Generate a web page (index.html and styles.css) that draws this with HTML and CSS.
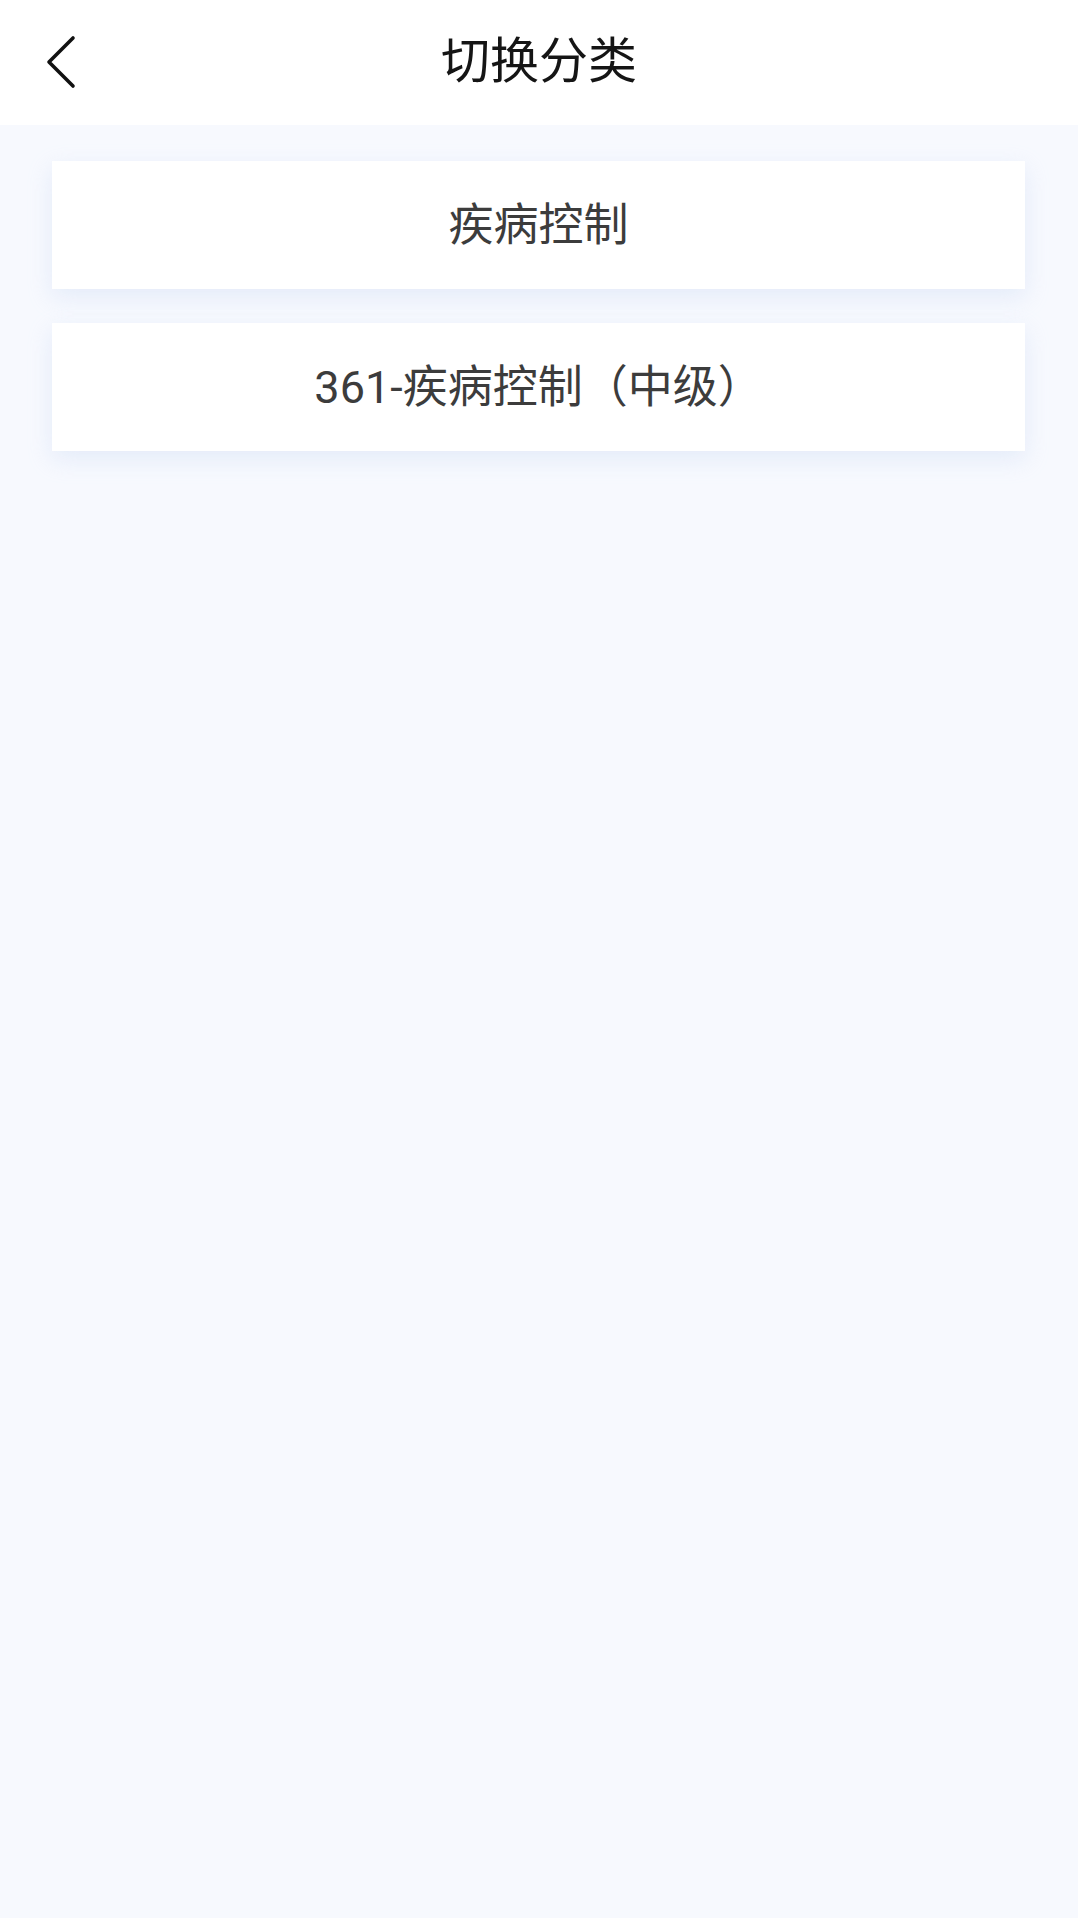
FILE: index.html
```html
<!DOCTYPE html>
<html lang="zh-CN">
<head>
<meta charset="utf-8">
<title>切换分类</title>
<link rel="stylesheet" href="styles.css">
</head>
<body>
<div class="page">
  <header class="topbar">
    <button class="back" aria-label="返回">
      <svg width="40" height="60" viewBox="0 0 40 60">
        <path d="M29 4 L5 28 L29 52" fill="none" stroke="#111" stroke-width="3.6" stroke-linecap="round" stroke-linejoin="round"/>
      </svg>
    </button>
    <h1 class="title">切换分类</h1>
  </header>
  <main class="list">
    <div class="card">疾病控制</div>
    <div class="card">361-疾病控制（中级）</div>
  </main>
</div>
</body>
</html>
```
FILE: styles.css
```css
html, body {
  margin: 0;
  padding: 0;
  height: 100%;
}
body {
  background: #f7f9fe;
  font-family: Roboto, "Noto Sans CJK SC", sans-serif;
}
.page {
  min-height: 100%;
}
.topbar {
  position: relative;
  height: 125px;
  background: #ffffff;
  display: flex;
  align-items: center;
  justify-content: center;
}
.back {
  position: absolute;
  left: 44px;
  top: 34px;
  width: 40px;
  height: 60px;
  padding: 0;
  border: none;
  background: transparent;
  display: flex;
}
.title {
  margin: 0;
  font-weight: 400;
  font-size: 49px;
  color: #151515;
  line-height: 1;
  padding-bottom: 2px;
}
.list {
  display: flex;
  flex-direction: column;
  gap: 34px;
  padding: 36px 53px 0 52px;
}
.card {
  height: 128px;
  background: #ffffff;
  display: flex;
  align-items: center;
  justify-content: center;
  font-size: 45px;
  color: #3c3c3c;
  box-shadow: 0 8px 22px rgba(190, 208, 240, 0.32);
  padding-bottom: 7px;
  box-sizing: border-box;
}
```
